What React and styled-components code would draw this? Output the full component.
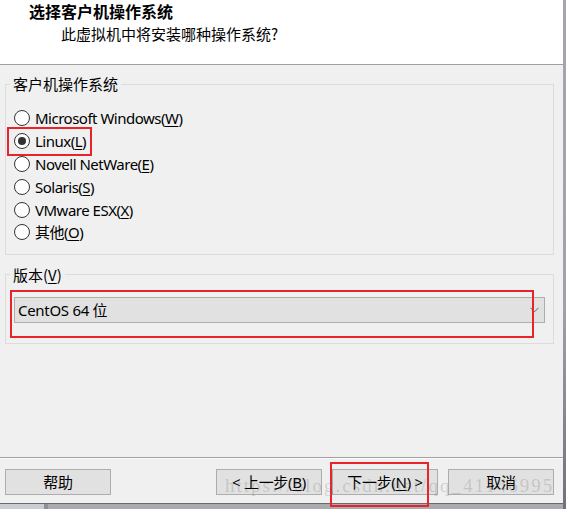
import React from "react";
import styled, { createGlobalStyle } from "styled-components";

const GlobalStyle = createGlobalStyle`
  *, *::before, *::after { box-sizing: border-box; }
  html, body { margin: 0; padding: 0; background: #f0f0f0; }
  body {
    font-family: "Noto Sans", "Noto Sans CJK SC", sans-serif;
    font-size: 15px;
    color: #000;
  }
`;

const Screen = styled.div`
  width: 566px;
  height: 509px;
  display: flex;
  overflow: hidden;
`;

const Window = styled.div`
  width: 563px;
  display: flex;
  flex-direction: column;
  background: #f0f0f0;
`;

const RightEdge = styled.div`
  flex: 1;
  background: linear-gradient(180deg, #a4a7b0 0%, #9fa2aa 60%, #6f7278 100%);
`;

const Header = styled.header`
  height: 65px;
  background: #fff;
  border-bottom: 1px solid #a0a0a0;
  padding: 1px 0 0 29px;
`;

const Title = styled.div`
  font-family: "Noto Sans CJK SC", sans-serif;
  font-weight: bold;
  font-size: 16px;
  line-height: 20px;
`;

const Subtitle = styled.div`
  font-family: "Noto Sans CJK SC", sans-serif;
  font-size: 15px;
  line-height: 20px;
  margin: 3px 0 0 32px;
`;

const Body = styled.main`
  flex: 1;
  padding: 0 9px 0 5px;
  display: flex;
  flex-direction: column;
`;

const Group = styled.fieldset`
  margin: ${(p) => p.$top}px 0 0 0;
  padding: ${(p) => p.$pt}px 0 ${(p) => p.$pb}px 4px;
  border: 1px solid #dcdcdc;
  min-width: 0;
`;

const Legend = styled.legend`
  padding: 0 3px;
  font-size: 15px;
  line-height: 20px;
  font-family: "Noto Sans CJK SC", sans-serif;
`;

const RadioList = styled.div`
  display: flex;
  flex-direction: column;
  margin-left: 4px;
`;

const RadioRow = styled.label`
  position: relative;
  display: flex;
  align-items: center;
  gap: 5px;
  height: 22.8px;
  width: fit-content;
  line-height: 20px;
`;

const RadioText = styled.span`
  letter-spacing: -0.5px;
`;

const RadioCircle = styled.span`
  width: 16px;
  height: 16px;
  border-radius: 50%;
  border: 1px solid #333;
  background: #fff;
  display: flex;
  align-items: center;
  justify-content: center;
  flex: none;
  &::after {
    content: "";
    width: 8px;
    height: 8px;
    border-radius: 50%;
    background: ${(p) => (p.$checked ? "#333" : "transparent")};
  }
`;

const Key = styled.u`
  text-decoration-thickness: 1px;
  text-underline-offset: 2px;
`;

const Highlight = styled.span`
  position: absolute;
  border: 2px solid #e8232c;
  pointer-events: none;
  left: ${(p) => p.$l}px;
  top: ${(p) => p.$t}px;
  right: ${(p) => p.$r}px;
  bottom: ${(p) => p.$b}px;
`;

const ComboWrap = styled.div`
  position: relative;
  margin: 0 8px 0 4px;
`;

const Combo = styled.div`
  height: 26px;
  border: 1px solid #adadad;
  background: #e1e1e1;
  display: flex;
  align-items: center;
  justify-content: space-between;
  padding: 0 5px 0 3px;
  line-height: 20px;
  letter-spacing: -0.3px;
`;

const Footer = styled.footer`
  position: relative;
  height: 46px;
  border-top: 1px solid #a0a0a0;
  box-shadow: inset 0 1px 0 #fdfdfd;
  padding: 11px 9px 0 5px;
  display: flex;
  align-items: flex-start;
`;

const Button = styled.button`
  width: ${(p) => p.$w || 106}px;
  height: 26px;
  border: 1px solid #adadad;
  background: #e1e1e1;
  font: inherit;
  font-size: 15px;
  line-height: 20px;
  letter-spacing: -0.3px;
  color: #000;
  padding: 0;
  margin-left: ${(p) => p.$ml || 0}px;
  position: relative;
`;

const Spacer = styled.div`
  flex: 1;
`;

const Watermark = styled.div`
  position: absolute;
  left: 225px;
  top: 16px;
  font-family: "Liberation Serif", serif;
  font-size: 19px;
  letter-spacing: 2px;
  line-height: 24px;
  color: rgba(110, 110, 110, 0.25);
  pointer-events: none;
  white-space: nowrap;
`;

const BottomStrip = styled.div`
  height: 6px;
  border-top: 1px solid #6a6a6a;
  background: linear-gradient(90deg, #c9ccd3 0 44px, #8d9097 44px 48px, #a9abb0 48px);
`;

const Chevron = () => (
  <svg width="9" height="6" viewBox="0 0 9 6">
    <polyline points="0.5,0.8 4.5,4.8 8.5,0.8" fill="none" stroke="#606060" strokeWidth="1" />
  </svg>
);

const options = [
  { pre: "Microsoft Windows(", key: "W" },
  { pre: "Linux(", key: "L", checked: true, hl: true },
  { pre: "Novell NetWare(", key: "E" },
  { pre: "Solaris(", key: "S" },
  { pre: "VMware ESX(", key: "X" },
  { pre: "其他(", key: "O" },
];

export default function App() {
  return (
    <>
      <GlobalStyle />
      <Screen>
        <Window>
          <Header>
            <Title>选择客户机操作系统</Title>
            <Subtitle>此虚拟机中将安装哪种操作系统?</Subtitle>
          </Header>
          <Body>
            <Group $top={9} $pt={13} $pb={10}>
              <Legend>客户机操作系统</Legend>
              <RadioList>
                {options.map((o) => (
                  <RadioRow key={o.key}>
                    <RadioCircle $checked={o.checked} />
                    <RadioText>
                      {o.pre}
                      <Key>{o.key}</Key>)
                    </RadioText>
                    {o.hl && <Highlight $l={-7} $t={-3} $r={-6} $b={-3} />}
                  </RadioRow>
                ))}
              </RadioList>
            </Group>
            <Group $top={10} $pt={12} $pb={20}>
              <Legend>
                版本(<Key>V</Key>)
              </Legend>
              <ComboWrap>
                <Combo>
                  <span>CentOS 64 位</span>
                  <Chevron />
                </Combo>
                <Highlight $l={-4} $t={-7} $r={11} $b={-15} />
              </ComboWrap>
            </Group>
          </Body>
          <Footer>
            <Button $w={106}>帮助</Button>
            <Spacer />
            <Button>
              &lt; 上一步(<Key>B</Key>)
            </Button>
            <Button $ml={10}>
              下一步(<Key>N</Key>) &gt;
              <Highlight $l={-3} $t={-8} $r={8} $b={-13} />
            </Button>
            <Button $ml={10}>取消</Button>
            <Watermark>https://blog.csdn.net/qq_41146995</Watermark>
          </Footer>
          <BottomStrip />
        </Window>
        <RightEdge />
      </Screen>
    </>
  );
}
